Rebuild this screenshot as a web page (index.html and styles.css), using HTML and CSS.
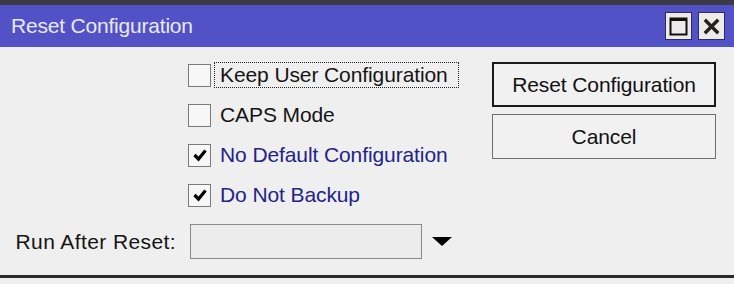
FILE: index.html
```html
<!DOCTYPE html>
<html>
<head>
<meta charset="utf-8">
<link rel="stylesheet" href="styles.css">
</head>
<body>
<div class="window">
  <div class="titlebar">
    <span class="title">Reset Configuration</span>
    <div class="tbtns">
      <span class="tbtn"><svg width="19" height="19" viewBox="0 0 19 19"><rect x="1.5" y="1.5" width="16" height="16" fill="none" stroke="#111" stroke-width="2"/><line x1="1.5" y1="3" x2="17.5" y2="3" stroke="#111" stroke-width="2"/></svg></span>
      <span class="tbtn"><svg width="17" height="17" viewBox="0 0 17 17"><path d="M3 3 L14 14 M14 3 L3 14" stroke="#222" stroke-width="3.4" stroke-linecap="square"/></svg></span>
    </div>
  </div>
  <div class="content">
    <div class="top">
      <div class="checks">
        <div class="row"><span class="box"></span><span class="lbl focus">Keep User Configuration</span></div>
        <div class="row"><span class="box"></span><span class="lbl">CAPS Mode</span></div>
        <div class="row"><span class="box"><svg width="18" height="18" viewBox="0 0 18 18"><path d="M3.5 9 L7.5 13 L14.5 4.5" fill="none" stroke="#000" stroke-width="3.2"/></svg></span><span class="lbl on">No Default Configuration</span></div>
        <div class="row"><span class="box"><svg width="18" height="18" viewBox="0 0 18 18"><path d="M3.5 9 L7.5 13 L14.5 4.5" fill="none" stroke="#000" stroke-width="3.2"/></svg></span><span class="lbl on">Do Not Backup</span></div>
      </div>
      <div class="buttons">
        <div class="btn default">Reset Configuration</div>
        <div class="btn">Cancel</div>
      </div>
    </div>
    <div class="runrow">
      <span class="runlbl">Run After Reset:</span>
      <span class="field"></span>
      <span class="arrow"></span>
    </div>
  </div>
</div>
</body>
</html>
```
FILE: styles.css
```css
html, body {
  margin: 0;
  padding: 0;
  background: #efefef;
  font-family: "Liberation Sans", Arial, sans-serif;
}
.window {
  width: 734px;
  height: 278px;
  box-sizing: border-box;
  border-top: 5px solid #3a3a48;
  border-bottom: 3px solid #2b2b2b;
  background: #efefef;
}
.titlebar {
  height: 42px;
  background: #5252c6;
  display: flex;
  align-items: center;
  padding-left: 11px;
  padding-right: 9px;
}
.title {
  color: #e9e9f6;
  font-size: 21px;
  letter-spacing: -0.2px;
  flex: 1;
}
.tbtns {
  display: flex;
  gap: 6px;
}
.tbtn {
  width: 27px;
  height: 28px;
  box-sizing: border-box;
  background: #ecebe9;
  border: 1px solid #2c2c60;
  display: flex;
  align-items: center;
  justify-content: center;
}
.content {
  padding-top: 8px;
}
.top {
  display: flex;
}
.checks {
  margin-left: 188px;
  display: flex;
  flex-direction: column;
}
.row {
  height: 40px;
  display: flex;
  align-items: center;
}
.box {
  width: 23px;
  height: 23px;
  box-sizing: border-box;
  border: 1px solid #7a7a7a;
  background: #f7f7f7;
  display: flex;
  align-items: center;
  justify-content: center;
}
.lbl {
  margin-left: 3px;
  border: 1px dotted transparent;
  padding: 0 10px 0 5px;
  font-size: 21px;
  color: #151515;
  letter-spacing: -0.1px;
}
.lbl.focus {
  border: 1.5px dotted #222;
}
.lbl.on {
  color: #23238a;
}
.buttons {
  margin-left: auto;
  margin-right: 18px;
  margin-top: 7px;
  width: 224px;
  display: flex;
  flex-direction: column;
  gap: 7px;
}
.btn {
  height: 45px;
  box-sizing: border-box;
  border: 1px solid #6e6e6e;
  background: #f1f1f1;
  display: flex;
  align-items: center;
  justify-content: center;
  font-size: 21px;
  color: #111;
  letter-spacing: -0.1px;
}
.btn.default {
  border: 2px solid #1a1a1a;
}
.runrow {
  margin-top: 9px;
  display: flex;
  align-items: center;
  height: 35px;
}
.runlbl {
  width: 176px;
  text-align: right;
  font-size: 21px;
  color: #151515;
  letter-spacing: 0.4px;
}
.field {
  margin-left: 14px;
  width: 232px;
  height: 35px;
  box-sizing: border-box;
  border: 1px solid #8a8a8a;
  background: #ececec;
}
.arrow {
  margin-left: 10px;
  width: 0;
  height: 0;
  border-left: 10px solid transparent;
  border-right: 10px solid transparent;
  border-top: 9px solid #000;
}
```
